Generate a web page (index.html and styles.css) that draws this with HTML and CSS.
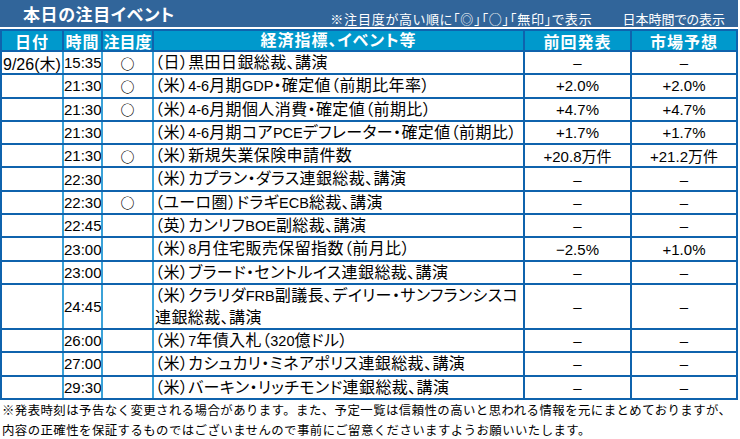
FILE: index.html
```html
<!DOCTYPE html>
<html lang="ja">
<head>
<meta charset="utf-8">
<title>本日の注目イベント</title>
<link rel="stylesheet" href="styles.css">
</head>
<body>
<div class="sheet">
  <div class="titlebar">
    <h1 class="title">本日の注目イベント</h1>
    <span class="note">※注目度が高い順に「◎」「○」「無印」で表示</span>
    <span class="tz">日本時間での表示</span>
  </div>
  <div class="table">
    <div class="row head">
      <div class="c date">日付</div>
      <div class="c time">時間</div>
      <div class="c att">注目度</div>
      <div class="c ev">経済指標、イベント等</div>
      <div class="c prev">前回発表</div>
      <div class="c fc">市場予想</div>
    </div>
    <div class="row">
      <div class="c date">9/26(木)</div>
      <div class="c time">15:35</div>
      <div class="c att">○</div>
      <div class="c ev">（日）黒田日銀総裁、講演</div>
      <div class="c prev">–</div>
      <div class="c fc">–</div>
    </div>
    <div class="row">
      <div class="c date"></div>
      <div class="c time">21:30</div>
      <div class="c att">○</div>
      <div class="c ev">（米）<span class="lat">4-6</span>月期<span class="lat">GDP</span>・確定値（前期比年率）</div>
      <div class="c prev">+2.0%</div>
      <div class="c fc">+2.0%</div>
    </div>
    <div class="row">
      <div class="c date"></div>
      <div class="c time">21:30</div>
      <div class="c att">○</div>
      <div class="c ev">（米）<span class="lat">4-6</span>月期個人消費・確定値（前期比）</div>
      <div class="c prev">+4.7%</div>
      <div class="c fc">+4.7%</div>
    </div>
    <div class="row">
      <div class="c date"></div>
      <div class="c time">21:30</div>
      <div class="c att"></div>
      <div class="c ev">（米）<span class="lat">4-6</span>月期コア<span class="lat">PCE</span>デフレーター・確定値（前期比）</div>
      <div class="c prev">+1.7%</div>
      <div class="c fc">+1.7%</div>
    </div>
    <div class="row">
      <div class="c date"></div>
      <div class="c time">21:30</div>
      <div class="c att">○</div>
      <div class="c ev">（米）新規失業保険申請件数</div>
      <div class="c prev">+20.8万件</div>
      <div class="c fc">+21.2万件</div>
    </div>
    <div class="row">
      <div class="c date"></div>
      <div class="c time">22:30</div>
      <div class="c att"></div>
      <div class="c ev">（米）カプラン・ダラス連銀総裁、講演</div>
      <div class="c prev">–</div>
      <div class="c fc">–</div>
    </div>
    <div class="row">
      <div class="c date"></div>
      <div class="c time">22:30</div>
      <div class="c att">○</div>
      <div class="c ev">（ユーロ圏）ドラギ<span class="lat">ECB</span>総裁、講演</div>
      <div class="c prev">–</div>
      <div class="c fc">–</div>
    </div>
    <div class="row">
      <div class="c date"></div>
      <div class="c time">22:45</div>
      <div class="c att"></div>
      <div class="c ev">（英）カンリフ<span class="lat">BOE</span>副総裁、講演</div>
      <div class="c prev">–</div>
      <div class="c fc">–</div>
    </div>
    <div class="row">
      <div class="c date"></div>
      <div class="c time">23:00</div>
      <div class="c att"></div>
      <div class="c ev">（米）<span class="lat">8</span>月住宅販売保留指数（前月比）</div>
      <div class="c prev">−2.5%</div>
      <div class="c fc">+1.0%</div>
    </div>
    <div class="row">
      <div class="c date"></div>
      <div class="c time">23:00</div>
      <div class="c att"></div>
      <div class="c ev">（米）ブラード・セントルイス連銀総裁、講演</div>
      <div class="c prev">–</div>
      <div class="c fc">–</div>
    </div>
    <div class="row double">
      <div class="c date"></div>
      <div class="c time">24:45</div>
      <div class="c att"></div>
      <div class="c ev">（米）クラリダ<span class="lat">FRB</span>副議長、デイリー・サンフランシスコ<br>連銀総裁、講演</div>
      <div class="c prev">–</div>
      <div class="c fc">–</div>
    </div>
    <div class="row">
      <div class="c date"></div>
      <div class="c time">26:00</div>
      <div class="c att"></div>
      <div class="c ev">（米）<span class="lat">7</span>年債入札（<span class="lat">320</span>億ドル）</div>
      <div class="c prev">–</div>
      <div class="c fc">–</div>
    </div>
    <div class="row">
      <div class="c date"></div>
      <div class="c time">27:00</div>
      <div class="c att"></div>
      <div class="c ev">（米）カシュカリ・ミネアポリス連銀総裁、講演</div>
      <div class="c prev">–</div>
      <div class="c fc">–</div>
    </div>
    <div class="row last">
      <div class="c date"></div>
      <div class="c time">29:30</div>
      <div class="c att"></div>
      <div class="c ev">（米）バーキン・リッチモンド連銀総裁、講演</div>
      <div class="c prev">–</div>
      <div class="c fc">–</div>
    </div>
  </div>
  <p class="footer">※発表時刻は予告なく変更される場合があります。また、予定一覧は信頼性の高いと思われる情報を元にまとめておりますが、<br>内容の正確性を保証するものではございませんので事前にご留意くださいますようお願いいたします。</p>
</div>
</body>
</html>
```

FILE: styles.css
```css
html, body {
  margin: 0;
  padding: 0;
  background: #ffffff;
}

body {
  font-family: "Liberation Sans", "Noto Sans CJK JP", sans-serif;
  font-feature-settings: "palt";
  color: #000000;
}

.sheet {
  width: 740px;
}

.titlebar {
  width: 738px;
  height: 27px;
  box-sizing: border-box;
  background: #31659a;
  color: #ffffff;
  display: flex;
  align-items: flex-start;
  padding-right: 13px;
}

.title {
  margin: 5px 0 0 23px;
  font-size: 17px;
  line-height: 22px;
  font-weight: bold;
  letter-spacing: 0.6px;
}

.note {
  margin: 11px 0 0 auto;
  font-family: "Noto Sans CJK JP", sans-serif;
  font-size: 13px;
  line-height: 16px;
  letter-spacing: 0.8px;
}

.tz {
  margin: 11px 0 0 30px;
  font-family: "Noto Sans CJK JP", sans-serif;
  font-size: 13px;
  line-height: 16px;
}

.table {
  margin-top: 2px;
  width: 738px;
  box-sizing: border-box;
  border: 2px solid #0f63ad;
}

.row {
  display: grid;
  grid-template-columns: 60px 39px 51px 371px 107px 106px;
  height: 23.3px;
  box-sizing: border-box;
  border-bottom: 2px solid #0f63ad;
  font-size: 15px;
}

.row.double {
  height: 45px;
}

.row.last {
  height: 21.4px;
  border-bottom: none;
}

.row.head {
  height: 21px;
  background: #0099cc;
  color: #ffffff;
  font-weight: bold;
  font-size: 16px;
}

.c {
  box-sizing: border-box;
  display: flex;
  align-items: center;
  white-space: nowrap;
  overflow: hidden;
}

.date {
  padding-left: 1px;
  font-size: 16px;
}

.time {
  border-left: 2px solid #3ba2d8;
  padding-left: 0;
}

.att {
  border-left: 2px solid #3ba2d8;
  justify-content: center;
  font-family: "Noto Sans CJK JP", sans-serif;
  font-size: 14px;
  font-weight: bold;
}

.ev {
  display: block;
  border-left: 2px solid #3ba2d8;
  padding-left: 1px;
  font-size: 16px;
  line-height: 21.3px;
  letter-spacing: 0.4px;
}

.lat {
  font-size: 14.5px;
  letter-spacing: 0;
}

.double .ev {
  line-height: 22px;
  padding-top: 0.5px;
}

.prev,
.fc {
  border-left: 2px solid #0f63ad;
  justify-content: center;
}

.head .c {
  display: flex;
  justify-content: center;
  padding-left: 0;
  border-left-color: #0f63ad;
  letter-spacing: 1px;
  font-size: 16px;
}

.head .att {
  letter-spacing: 0;
  font-family: "Liberation Sans", "Noto Sans CJK JP", sans-serif;
}

.head .date {
  border-left: none;
}

.footer {
  margin: 0;
  padding-left: 2px;
  font-family: "Noto Sans CJK JP", sans-serif;
  font-feature-settings: normal;
  font-size: 12.4px;
  letter-spacing: 0.45px;
  line-height: 20px;
  white-space: nowrap;
}
```
